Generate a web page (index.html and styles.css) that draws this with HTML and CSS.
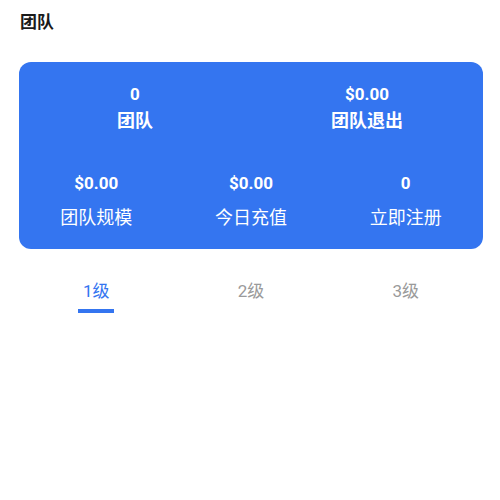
FILE: index.html
```html
<!DOCTYPE html>
<html lang="zh-CN">
<head>
    <meta charset="UTF-8">
    <meta name="viewport" content="width=device-width, initial-scale=1.0">
    <title>团队</title>
    <link rel="stylesheet" href="styles.css">
</head>
<body>
    <div class="page">
        <h1 class="page-title">团队</h1>

        <div class="team-card">
            <div class="stats-row top">
                <div class="stat">
                    <div class="stat-value">0</div>
                    <div class="stat-label">团队</div>
                </div>
                <div class="stat">
                    <div class="stat-value">$0.00</div>
                    <div class="stat-label">团队退出</div>
                </div>
            </div>
            <div class="stats-row bottom">
                <div class="stat">
                    <div class="stat-value">$0.00</div>
                    <div class="stat-label">团队规模</div>
                </div>
                <div class="stat">
                    <div class="stat-value">$0.00</div>
                    <div class="stat-label">今日充值</div>
                </div>
                <div class="stat">
                    <div class="stat-value">0</div>
                    <div class="stat-label">立即注册</div>
                </div>
            </div>
        </div>

        <div class="tabs">
            <div class="tab active">1级</div>
            <div class="tab">2级</div>
            <div class="tab">3级</div>
        </div>
    </div>
</body>
</html>
```

FILE: styles.css
```css
:root {
    --primary-color: #3475f0;
    --muted-color: #9a9a9a;
}

body {
    margin: 0;
    padding: 0;
    background-color: #ffffff;
    font-family: Roboto, "Noto Sans CJK SC", sans-serif;
    color: #1a1a1a;
}

.page {
    padding: 0 17px 0 19px;
}

.page-title {
    margin: 0;
    padding: 10px 0 0 1px;
    font-size: 17px;
    font-weight: 700;
    line-height: 24px;
}

.team-card {
    margin-top: 28px;
    background-color: var(--primary-color);
    border-radius: 12px;
    color: white;
    padding: 20px 0 18px;
}

.stats-row {
    display: grid;
}

.stats-row.top {
    grid-template-columns: 1fr 1fr;
}

.stats-row.bottom {
    grid-template-columns: 1fr 1fr 1fr;
    margin-top: 37px;
}

.stat {
    text-align: center;
}

.stat-value {
    font-size: 17px;
    font-weight: 700;
    line-height: 24px;
}

.stat-label {
    font-size: 18px;
    font-weight: 700;
    line-height: 26px;
    margin-top: 2px;
}

.stats-row.bottom .stat-label {
    font-weight: 400;
    margin-top: 10px;
}

.tabs {
    display: grid;
    grid-template-columns: 1fr 1fr 1fr;
    margin-top: 30px;
}

.tab {
    justify-self: center;
    font-size: 17px;
    line-height: 24px;
    color: var(--muted-color);
    padding-bottom: 10px;
    position: relative;
}

.tab.active {
    color: var(--primary-color);
}

.tab.active::after {
    content: "";
    position: absolute;
    left: 50%;
    bottom: 0;
    width: 36px;
    height: 4px;
    margin-left: -18px;
    background-color: var(--primary-color);
}
```
